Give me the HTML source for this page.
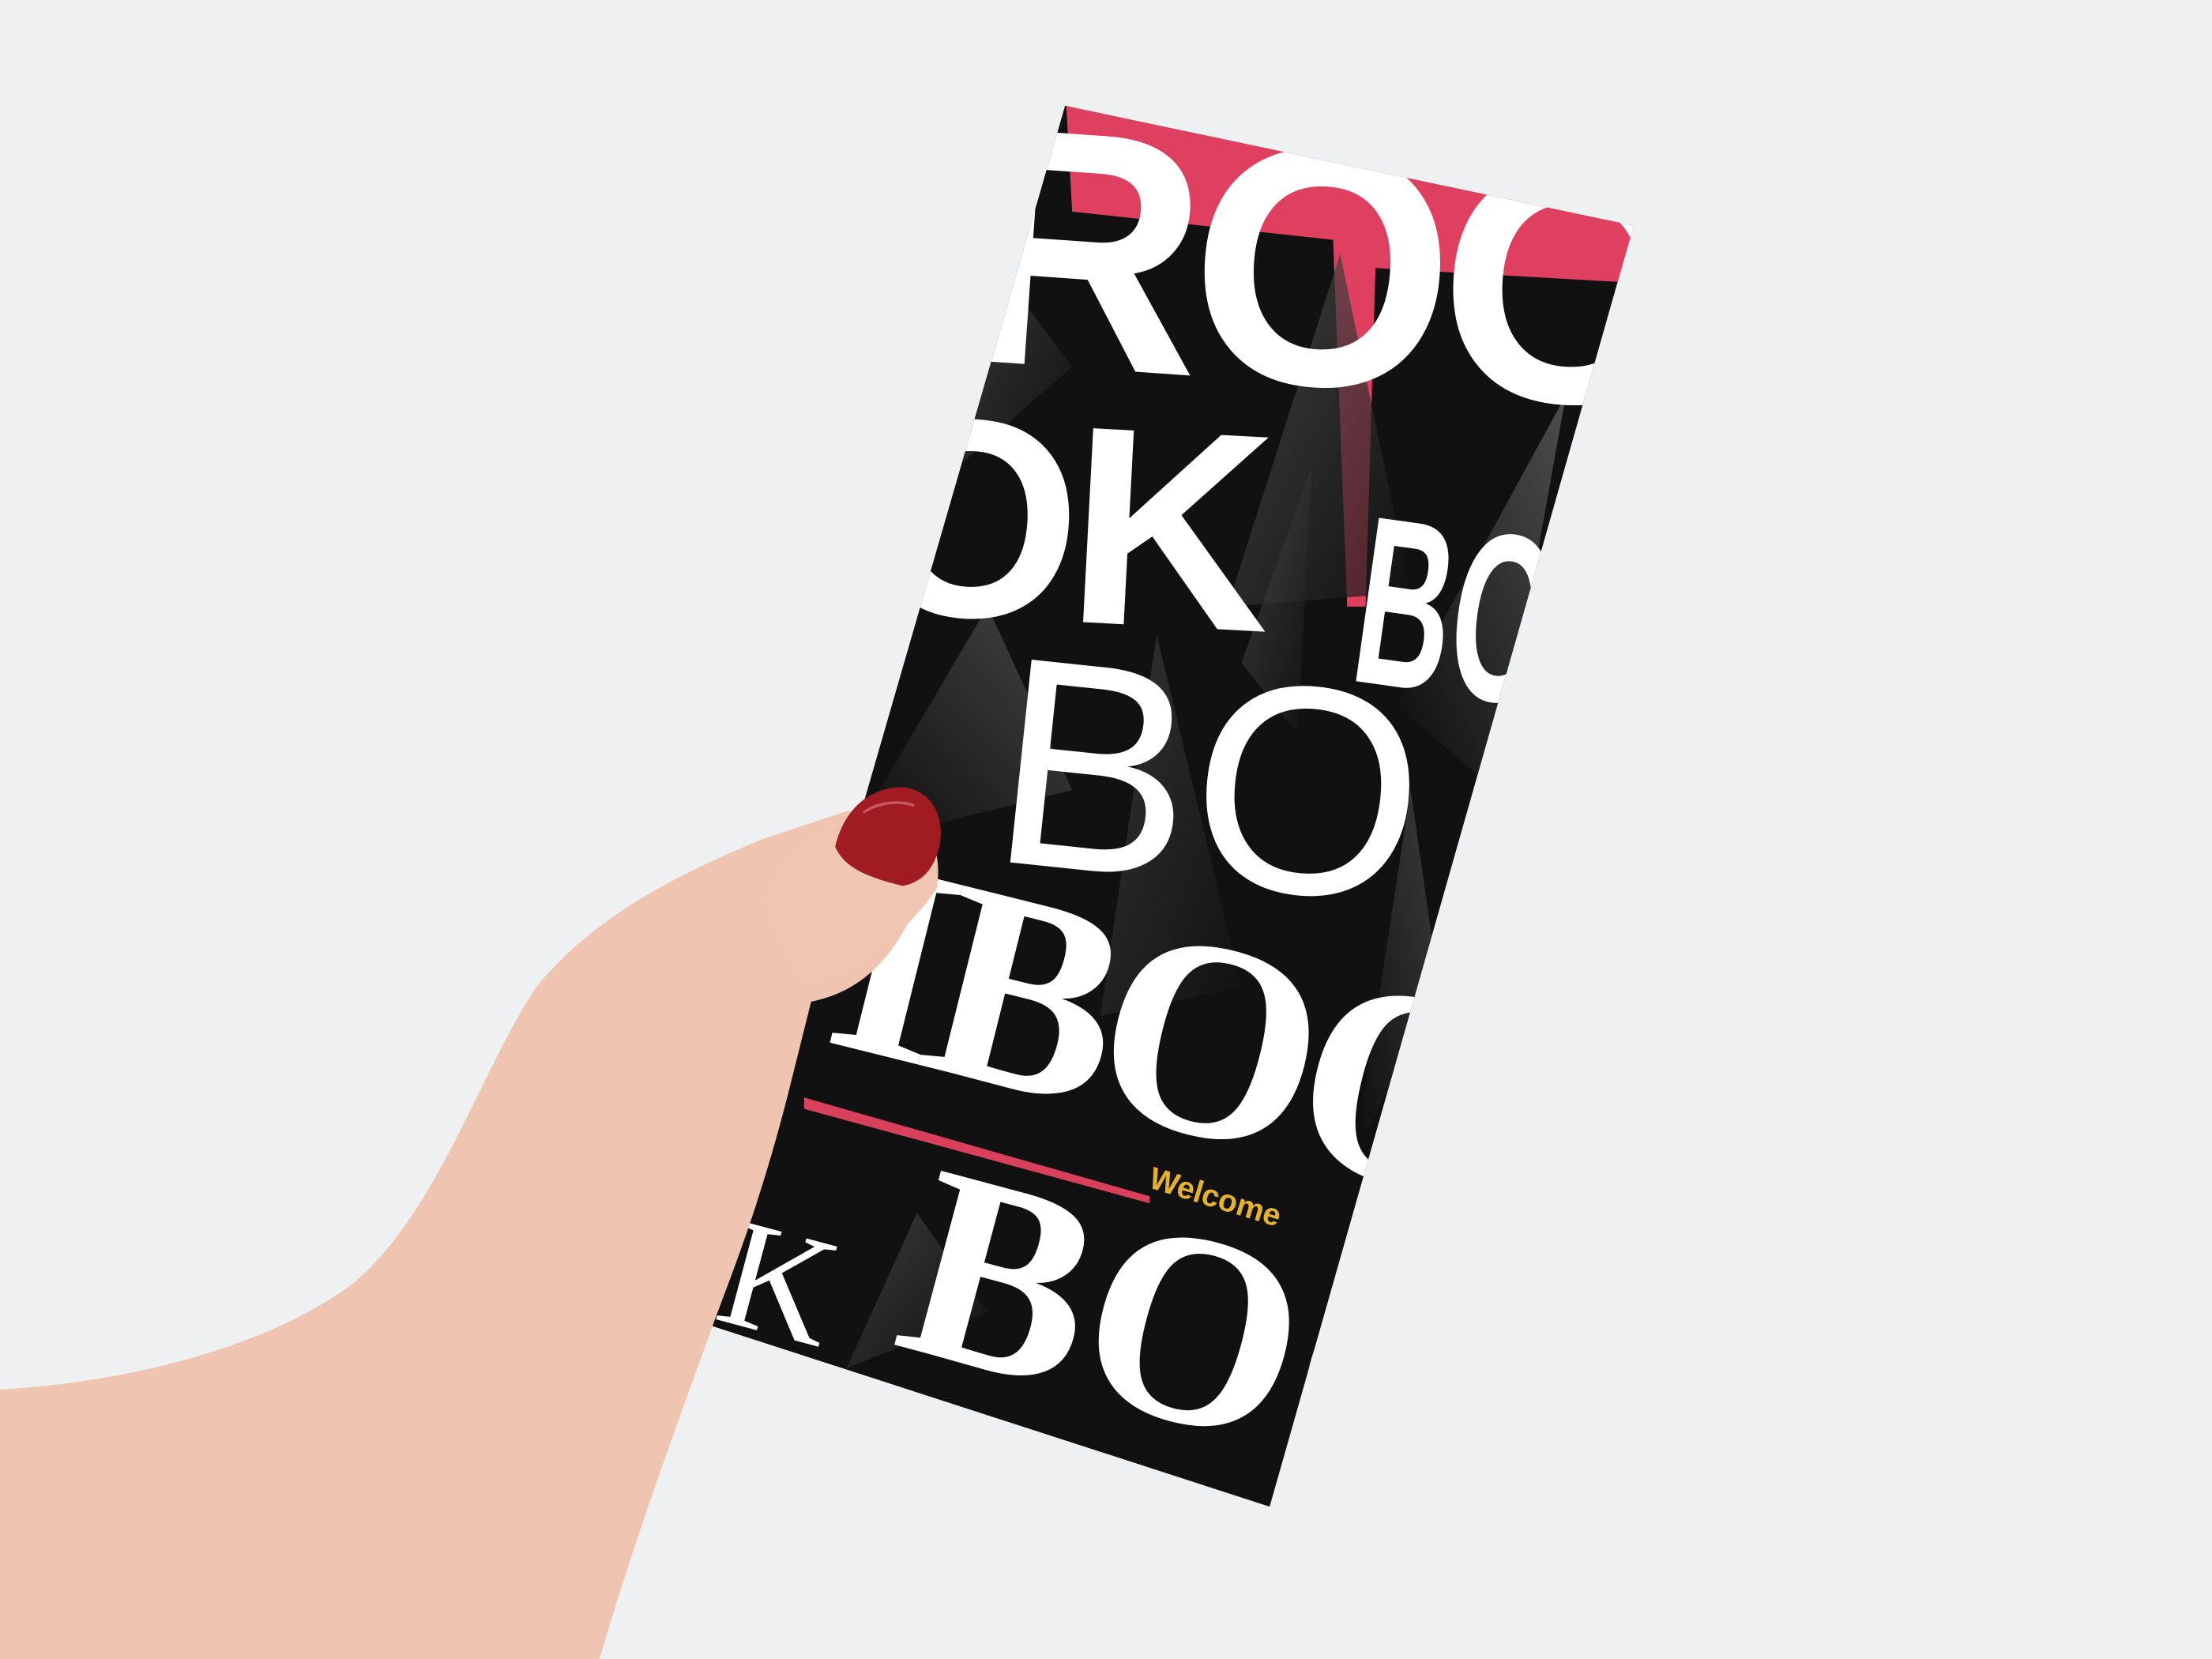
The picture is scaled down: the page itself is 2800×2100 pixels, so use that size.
<!DOCTYPE html>
<html><head><meta charset="utf-8"><style>
html,body{margin:0;padding:0;background:#eff0f2;}
svg{display:block}
</style></head><body>
<svg width="2800" height="2100" viewBox="0 0 1568 1176" preserveAspectRatio="none" xmlns="http://www.w3.org/2000/svg">
<defs>
<clipPath id="fl"><polygon points="755,75 1158,160 900,1068 505,940"/></clipPath>
<linearGradient id="sh" x1="0" y1="0" x2="1" y2="1"><stop offset="0" stop-color="#555"/><stop offset="1" stop-color="#111"/></linearGradient>
<linearGradient id="sh2" x1="1" y1="0" x2="0" y2="1"><stop offset="0" stop-color="#666"/><stop offset="1" stop-color="#0a0a0a"/></linearGradient>
</defs>
<rect width="1568" height="1176" fill="#eff0f2"/>
<g clip-path="url(#fl)">
<rect x="400" y="0" width="900" height="1176" fill="#111"/>
<polygon points="755,60 1170,150 1150,200 975,190 968,430 955,430 945,170 760,150" fill="#e04060"/>
<polygon points="570,778 815,848 815,853 570,786" fill="#d8405c"/>
<!-- shadow shafts -->
<polygon points="950,180 1000,420 870,430" fill="url(#sh)" opacity=".7"/>
<polygon points="1110,280 1060,560 990,500" fill="url(#sh2)" opacity=".7"/>
<polygon points="930,330 880,470 920,520" fill="url(#sh)" opacity=".6"/>
<polygon points="700,430 600,600 760,560" fill="url(#sh2)" opacity=".6"/>
<polygon points="820,450 780,720 880,700" fill="url(#sh)" opacity=".5"/>
<polygon points="1000,560 960,820 1020,700" fill="url(#sh2)" opacity=".5"/>
<polygon points="650,860 600,970 700,930" fill="url(#sh)" opacity=".6"/>
<polygon points="700,180 680,330 760,260" fill="url(#sh)" opacity=".6"/>
<g fill="#fff" font-family="Liberation Sans, sans-serif">
<text x="680" y="270" font-size="240" font-weight="bold" transform="rotate(4 900 200)" letter-spacing="-10">ROO</text>
<text x="610" y="440" font-size="200" font-weight="bold" transform="rotate(3 750 380)" letter-spacing="-8">OK</text>
<text transform="translate(955,482) rotate(8) scale(.55,1)" font-size="170" font-weight="bold">BO</text>
<text x="560" y="620" font-size="200" transform="rotate(6 850 560)">\</text>
<text x="705" y="625" font-size="210" font-weight="normal" transform="rotate(6 850 560)">BO</text>
<text x="590" y="790" font-size="200" font-weight="bold" font-family="Liberation Serif, serif" transform="rotate(14 800 730)" letter-spacing="-10">IBOO</text>
<text x="645" y="995" font-size="195" font-weight="bold" font-family="Liberation Serif, serif" transform="rotate(15 800 920)">BOO</text>
<text x="515" y="945" font-size="110" font-family="Liberation Serif, serif" transform="rotate(15 550 900)">K</text>
</g>
<text x="810" y="856" font-size="22" font-weight="bold" fill="#e6b22c" font-family="Liberation Sans, sans-serif" transform="rotate(17 860 860)">Welcome</text>
</g>
<!-- hand -->
<path d="M0,985 C90,980 190,955 250,910 C310,860 340,760 380,700 C420,650 480,620 540,595 L600,575 C625,572 640,600 645,625 L650,640 C630,690 600,705 575,710 L560,770 C540,850 520,900 505,940 C480,1010 450,1090 425,1176 L0,1176 Z" fill="#efc4b0"/>
<path d="M540,640 C560,600 590,575 640,570 C660,585 668,605 664,630 C640,665 595,700 565,695 Z" fill="#f0c6b3"/>
<path d="M592,600 C598,575 615,558 640,558 C660,560 670,578 666,600 C662,615 655,625 640,628 C615,622 598,615 592,600 Z" fill="#a11c22"/>
<path d="M612,576 C622,569 636,567 648,571" stroke="#c9585e" stroke-width="2" fill="none"/>
</svg>
</body></html>
